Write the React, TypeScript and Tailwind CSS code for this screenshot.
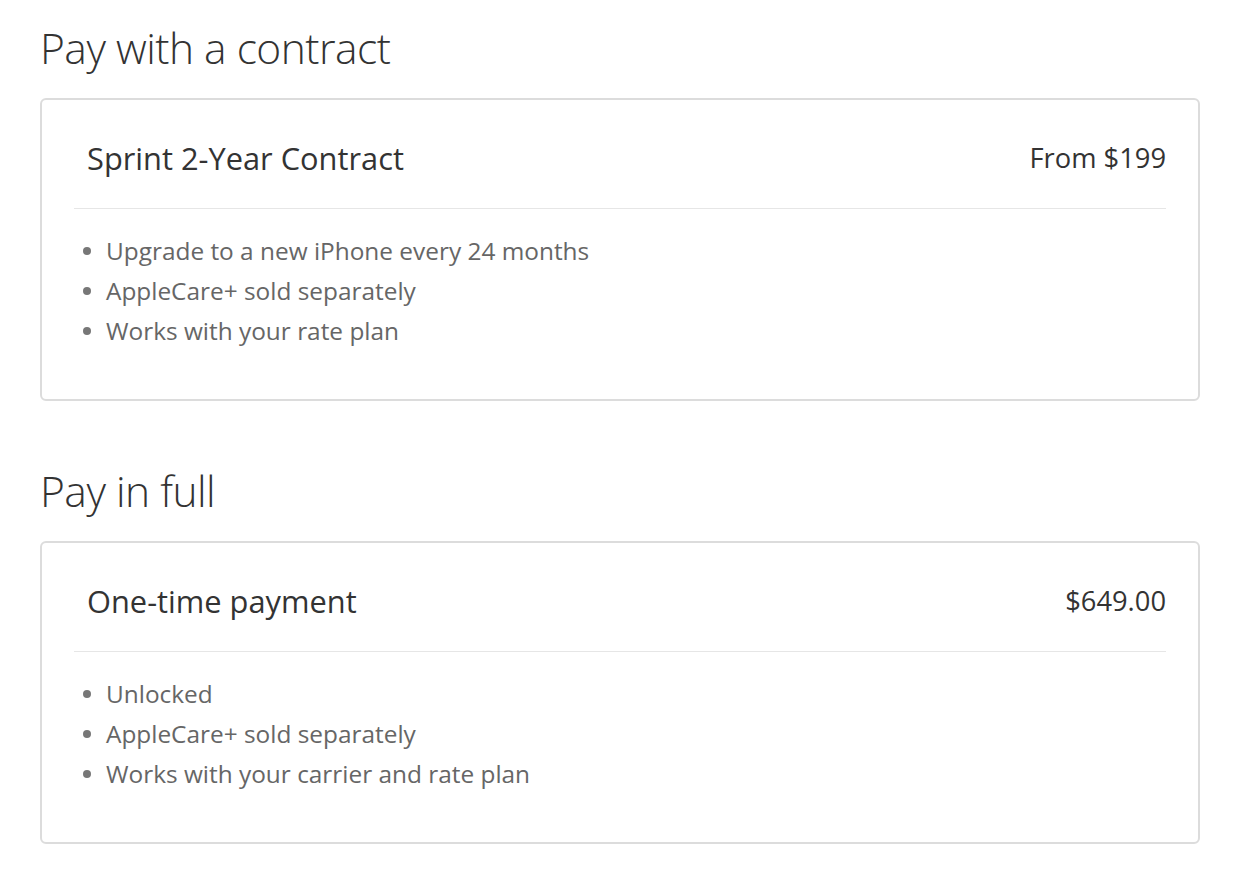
import React from 'react';

type Plan = {
  heading: string;
  title: string;
  price: string;
  features: string[];
};

const plans: Plan[] = [
  {
    heading: 'Pay with a contract',
    title: 'Sprint 2-Year Contract',
    price: 'From $199',
    features: ['Upgrade to a new iPhone every 24 months', 'AppleCare+ sold separately', 'Works with your rate plan'],
  },
  {
    heading: 'Pay in full',
    title: 'One-time payment',
    price: '$649.00',
    features: ['Unlocked', 'AppleCare+ sold separately', 'Works with your carrier and rate plan'],
  },
];

function PlanSection({ plan }: { plan: Plan }) {
  return (
    <section>
      <h2 className="text-[42.5px] leading-[52px] font-light text-[#333] tracking-[-0.5px]">{plan.heading}</h2>
      {/* card */}
      <div className="mt-[24px] h-[303px] rounded-[6px] border-2 border-[#dcdcdc] px-[32px]">
        <div className="flex items-center justify-between pt-[38px] pb-[30px] pl-[13px] border-b border-[#e6e6e6]">
          <h3 className="text-[30.8px] leading-[40px] text-[#333]">{plan.title}</h3>
          <span className="text-[27.3px] leading-[40px] text-[#333]">{plan.price}</span>
        </div>
        <ul className="pt-[22px] pl-[9px]">
          {plan.features.map((f) => (
            <li key={f} className="flex items-center text-[24.4px] leading-[40px] text-[#666]">
              <span className="mr-[15px] h-[8px] w-[8px] rounded-full bg-[#777]" />
              {f}
            </li>
          ))}
        </ul>
      </div>
    </section>
  );
}

export default function App() {
  return (
    <div className="min-h-[888px] bg-white px-[40px] pt-[22px]" style={{ fontFamily: '"Open Sans", "Liberation Sans", sans-serif' }}>
      <div className="flex w-[1160px] flex-col gap-[64px]">
        {plans.map((p) => (
          <PlanSection key={p.heading} plan={p} />
        ))}
      </div>
    </div>
  );
}
